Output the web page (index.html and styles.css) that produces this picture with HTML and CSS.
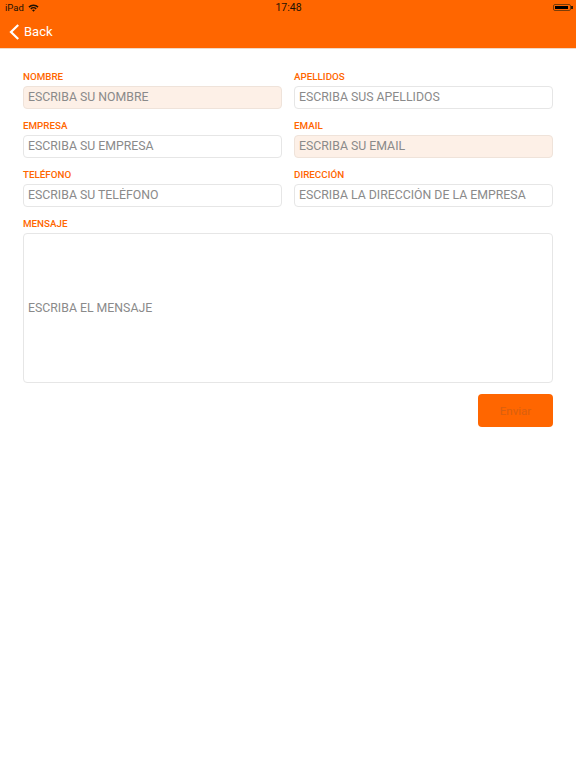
FILE: index.html
```html
<!DOCTYPE html>
<html lang="es">
<head>
    <meta charset="UTF-8">
    <meta name="viewport" content="width=device-width, initial-scale=1.0">
    <title>Contacto</title>
    <link rel="stylesheet" href="styles.css">
</head>
<body>
    <div class="header">
        <div class="status-bar">
            <div class="status-left">
                <span>iPad</span>
                <svg class="wifi" width="11" height="8" viewBox="0 0 12 9">
                    <path d="M0.3 2.9 A8 8 0 0 1 11.7 2.9 L10.5 4.1 A6.3 6.3 0 0 0 1.5 4.1 Z" fill="#1c1204"/>
                    <path d="M2.4 5 A5 5 0 0 1 9.6 5 L8.4 6.1 A3.4 3.4 0 0 0 3.6 6.1 Z" fill="#1c1204"/>
                    <path d="M4.4 7 A2.2 2.2 0 0 1 7.6 7 L6 8.7 Z" fill="#1c1204"/>
                </svg>
            </div>
            <div class="status-time">17:48</div>
            <div class="battery"><div class="battery-level"></div></div>
        </div>
        <div class="nav-bar">
            <svg class="back-icon" width="11" height="16" viewBox="0 0 11 16">
                <path d="M9.2 1 L2 8 L9.2 15" fill="none" stroke="#fff" stroke-width="2.2"/>
            </svg>
            <span>Back</span>
        </div>
    </div>

    <form class="contact-form">
        <div class="field-grid">
            <div class="field">
                <label for="nombre">NOMBRE</label>
                <input class="required" type="text" id="nombre" placeholder="ESCRIBA SU NOMBRE">
            </div>
            <div class="field">
                <label for="apellidos">APELLIDOS</label>
                <input type="text" id="apellidos" placeholder="ESCRIBA SUS APELLIDOS">
            </div>
            <div class="field">
                <label for="empresa">EMPRESA</label>
                <input type="text" id="empresa" placeholder="ESCRIBA SU EMPRESA">
            </div>
            <div class="field">
                <label for="email">EMAIL</label>
                <input class="required" type="text" id="email" placeholder="ESCRIBA SU EMAIL">
            </div>
            <div class="field">
                <label for="telefono">TELÉFONO</label>
                <input type="text" id="telefono" placeholder="ESCRIBA SU TELÉFONO">
            </div>
            <div class="field">
                <label for="direccion">DIRECCIÓN</label>
                <input type="text" id="direccion" placeholder="ESCRIBA LA DIRECCIÓN DE LA EMPRESA">
            </div>
        </div>

        <div class="field">
            <label for="mensaje">MENSAJE</label>
            <div class="message-box" id="mensaje">ESCRIBA EL MENSAJE</div>
        </div>

        <div class="actions">
            <button type="button">Enviar</button>
        </div>
    </form>
</body>
</html>
```

FILE: styles.css
```css
* {
    box-sizing: border-box;
}

body {
    background: #fff;
    margin: 0;
    padding: 0;
    font-family: Roboto, "Liberation Sans", sans-serif;
}

.header {
    background: #ff6600;
    height: 49px;
    border-bottom: 1px solid #f0d9c8;
}

.status-bar {
    height: 15px;
    display: grid;
    grid-template-columns: 1fr auto 1fr;
    align-items: center;
    padding: 0 4px 0 5px;
    font-size: 9.5px;
    color: #1c1204;
}

.status-left {
    display: flex;
    align-items: center;
    gap: 4px;
}

.status-time {
    font-size: 10.5px;
}

.battery {
    justify-self: end;
    width: 18px;
    height: 7px;
    padding: 1px;
    border: 1px solid #7a3d08;
    border-radius: 2px;
    margin-right: 1px;
    position: relative;
}

.battery::after {
    content: "";
    position: absolute;
    right: -3px;
    top: 1px;
    width: 2px;
    height: 3px;
    background: #3a1c04;
}

.battery-level {
    background: #000;
    width: 13px;
    height: 100%;
}

.nav-bar {
    height: 33px;
    display: flex;
    align-items: center;
    gap: 4px;
    padding-left: 9px;
    color: #fff;
    font-size: 13px;
}

.contact-form {
    padding: 21px 23px 0;
}

.field-grid {
    display: grid;
    grid-template-columns: 259px 259px;
    column-gap: 12px;
}

.field {
    margin-bottom: 4px;
}

label {
    display: block;
    height: 16px;
    line-height: 13px;
    font-size: 9.8px;
    font-weight: 500;
    color: #ff6600;
}

input {
    display: block;
    width: 100%;
    height: 23px;
    padding: 0 4px 1px;
    margin-bottom: 6px;
    border: 1px solid #e6e6e6;
    border-radius: 4px;
    background: #fff;
    font-family: inherit;
    font-size: 12.3px;
    outline: none;
}

input::placeholder {
    color: #8a8a8a;
    opacity: 1;
}

input.required {
    background: #fdf0e7;
    border-color: #efe3da;
}

.message-box {
    height: 150px;
    display: flex;
    align-items: center;
    padding: 0 4px;
    border: 1px solid #e6e6e6;
    border-radius: 4px;
    color: #8a8a8a;
    font-size: 12.3px;
}

.actions {
    display: flex;
    justify-content: flex-end;
    margin-top: 11px;
}

button {
    width: 75px;
    height: 33px;
    border: none;
    border-radius: 4px;
    background: #ff6600;
    color: #d9600f;
    font-family: inherit;
    font-size: 11.5px;
}
```
